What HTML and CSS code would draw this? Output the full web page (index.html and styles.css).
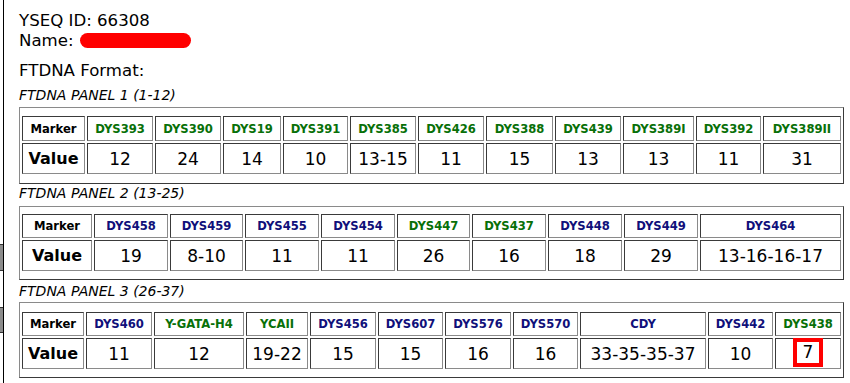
FILE: index.html
```html
<!DOCTYPE html>
<html>
<head>
<meta charset="utf-8">
<link rel="stylesheet" href="styles.css">
</head>
<body>
<div class="edge edge-a"></div>
<div class="edge edge-b"></div>
<div class="page">
  <div class="line">YSEQ ID: 66308</div>
  <div class="line">Name: <span class="redact"></span></div>
  <div class="line format">FTDNA Format:</div>

  <div class="label l1">FTDNA PANEL 1 (1-12)</div>
  <div class="panel p1">
    <table class="strs t1">
      <tr>
        <th class="mk">Marker</th>
        <th class="g">DYS393</th><th class="g">DYS390</th><th class="g">DYS19</th><th class="g">DYS391</th>
        <th class="g">DYS385</th><th class="g">DYS426</th><th class="g">DYS388</th><th class="g">DYS439</th>
        <th class="g">DYS389I</th><th class="g">DYS392</th><th class="g">DYS389II</th>
      </tr>
      <tr>
        <td class="vl">Value</td>
        <td>12</td><td>24</td><td>14</td><td>10</td><td>13-15</td><td>11</td>
        <td>15</td><td>13</td><td>13</td><td>11</td><td>31</td>
      </tr>
    </table>
  </div>

  <div class="label l2">FTDNA PANEL 2 (13-25)</div>
  <div class="panel p2">
    <table class="strs t2">
      <tr>
        <th class="mk">Marker</th>
        <th class="b">DYS458</th><th class="b">DYS459</th><th class="b">DYS455</th><th class="b">DYS454</th>
        <th class="g">DYS447</th><th class="g">DYS437</th><th class="b">DYS448</th><th class="b">DYS449</th>
        <th class="b">DYS464</th>
      </tr>
      <tr>
        <td class="vl">Value</td>
        <td>19</td><td>8-10</td><td>11</td><td>11</td><td>26</td><td>16</td>
        <td>18</td><td>29</td><td>13-16-16-17</td>
      </tr>
    </table>
  </div>

  <div class="label l3">FTDNA PANEL 3 (26-37)</div>
  <div class="panel p3">
    <table class="strs t3">
      <tr>
        <th class="mk">Marker</th>
        <th class="b">DYS460</th><th class="g">Y-GATA-H4</th><th class="g">YCAII</th><th class="b">DYS456</th>
        <th class="b">DYS607</th><th class="b">DYS576</th><th class="b">DYS570</th><th class="b">CDY</th>
        <th class="b">DYS442</th><th class="g">DYS438</th>
      </tr>
      <tr>
        <td class="vl">Value</td>
        <td>11</td><td>12</td><td>19-22</td><td>15</td><td>15</td><td>16</td>
        <td>16</td><td>33-35-35-37</td><td>10</td><td><span class="mark">7</span></td>
      </tr>
    </table>
  </div>
</div>
</body>
</html>
```

FILE: styles.css
```css
html, body {
  margin: 0;
  padding: 0;
  background: #fff;
}
body {
  width: 850px;
  height: 383px;
  overflow: hidden;
  position: relative;
  font-family: "DejaVu Sans", Verdana, sans-serif;
  color: #000;
}
.page {
  margin-left: 3px;
  border-left: 1px solid #000;
  min-height: 383px;
  box-sizing: border-box;
  padding: 11px 6px 0 15px;
}
.edge {
  position: absolute;
  left: 0;
  width: 3px;
  background: #8c8c8c;
  border-top: 1px solid #333;
  border-bottom: 1px solid #333;
}
.edge-a { top: 244px; height: 25px; }
.edge-b { top: 307px; height: 24px; }

.line {
  font-size: 16.6px;
  line-height: 20px;
  height: 20px;
}
.format { margin-top: 10px; }
.redact {
  display: inline-block;
  width: 111px;
  height: 15px;
  border-radius: 8px;
  background: #ff0000;
  vertical-align: -2px;
  margin-left: 1px;
}
.label {
  font-size: 14px;
  font-style: italic;
  line-height: 17px;
}
.l1 { margin-top: 6px; margin-bottom: 3px; }
.l2 { margin-top: 1px; margin-bottom: 4px; }
.l3 { margin-top: 3px; margin-bottom: 2px; }

.panel {
  border: 1px solid;
  border-color: #8a8a8a #3a3a3a #3a3a3a #8a8a8a;
}
.p1 { padding: 6px 0 7px; }
.p2 { padding: 5px 0 6px; }
.p3 { padding: 7px 0 6px; }

.strs {
  width: 100%;
  table-layout: fixed;
  border-collapse: separate;
  border-spacing: 2px;
}
.strs th, .strs td {
  box-sizing: border-box;
  border: 1px solid;
  border-color: #3a3a3a #8a8a8a #8a8a8a #3a3a3a;
  padding: 0 1px;
  text-align: center;
  vertical-align: middle;
  white-space: nowrap;
}
.strs th {
  font-size: 11.6px;
  font-weight: bold;
  height: 24px;
}
.t1 th { height: 25px; }
.strs td {
  font-size: 17px;
  height: 31px;
}
.strs .mk { color: #000; }
.strs .vl { font-size: 16px; font-weight: bold; }
.g { color: #087008; }
.b { color: #10107a; }

.mark {
  display: inline-block;
  border: 4px solid #f00;
  line-height: 21px;
  width: 30px;
  box-sizing: border-box;
  margin-top: -3px;
}

/* column widths, panel 1 */
.t1 th:nth-child(1) { width: 63px; }
.t1 th:nth-child(2) { width: 66px; }
.t1 th:nth-child(3) { width: 66px; }
.t1 th:nth-child(4) { width: 58px; }
.t1 th:nth-child(5) { width: 65px; }
.t1 th:nth-child(6) { width: 66px; }
.t1 th:nth-child(7) { width: 66px; }
.t1 th:nth-child(8) { width: 67px; }
.t1 th:nth-child(9) { width: 66px; }
.t1 th:nth-child(10) { width: 71px; }
.t1 th:nth-child(11) { width: 65px; }
.t1 th:nth-child(12) { width: 78px; }

/* column widths, panel 2 */
.t2 th:nth-child(1) { width: 70px; }
.t2 th:nth-child(2) { width: 74px; }
.t2 th:nth-child(3) { width: 73px; }
.t2 th:nth-child(4) { width: 74px; }
.t2 th:nth-child(5) { width: 74px; }
.t2 th:nth-child(6) { width: 73px; }
.t2 th:nth-child(7) { width: 74px; }
.t2 th:nth-child(8) { width: 74px; }
.t2 th:nth-child(9) { width: 74px; }
.t2 th:nth-child(10) { width: 141px; }

/* column widths, panel 3 */
.t3 th:nth-child(1) { width: 62px; }
.t3 th:nth-child(2) { width: 66px; }
.t3 th:nth-child(3) { width: 90px; }
.t3 th:nth-child(4) { width: 62px; }
.t3 th:nth-child(5) { width: 66px; }
.t3 th:nth-child(6) { width: 65px; }
.t3 th:nth-child(7) { width: 66px; }
.t3 th:nth-child(8) { width: 65px; }
.t3 th:nth-child(9) { width: 126px; }
.t3 th:nth-child(10) { width: 65px; }
.t3 th:nth-child(11) { width: 66px; }
```
